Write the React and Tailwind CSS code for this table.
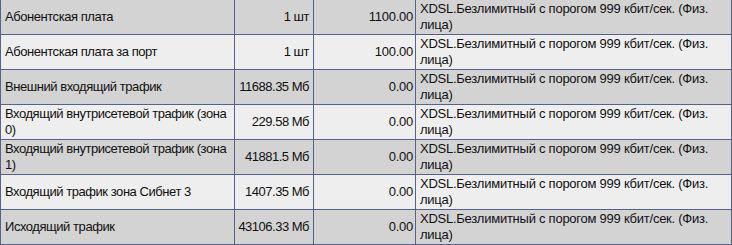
const PLAN = "XDSL.Безлимитный с порогом 999 кбит/сек. (Физ. лица)";

const rows = [
	{ name: "Абонентская плата", qty: "1 шт", sum: "1100.00" },
	{ name: "Абонентская плата за порт", qty: "1 шт", sum: "100.00" },
	{ name: "Внешний входящий трафик", qty: "11688.35 Мб", sum: "0.00" },
	{ name: "Входящий внутрисетевой трафик (зона 0)", qty: "229.58 Мб", sum: "0.00" },
	{ name: "Входящий внутрисетевой трафик (зона 1)", qty: "41881.5 Мб", sum: "0.00" },
	{ name: "Входящий трафик зона Сибнет 3", qty: "1407.35 Мб", sum: "0.00" },
	{ name: "Исходящий трафик", qty: "43106.33 Мб", sum: "0.00" }
];

function App() {
	return (
		<div
			className="w-[732px] h-[245px] overflow-hidden bg-white text-[13px] leading-4 tracking-[-0.25px] text-[#111]"
			style={{ fontFamily: "'Liberation Sans', Arial, sans-serif" }}
		>
			<div className="grid grid-cols-[235px_79px_102px_316px]">
				{rows.map((row, i) => {
					const bg = i % 2 === 0 ? "bg-[#d3d3d3]" : "bg-[#eeeeee]";
					const cell = `h-[35px] flex items-center border-b border-r border-[#56628c] ${bg}`;
					return (
						<div key={i} className="contents">
							<div className={`${cell} border-l pl-1 pr-0 tracking-[-0.45px]`}>{row.name}</div>
							<div className={`${cell} justify-end pr-1 whitespace-nowrap tracking-[-0.5px]`}>{row.qty}</div>
							<div className={`${cell} justify-end pr-[2px] whitespace-nowrap`}>{row.sum}</div>
							<div className={`${cell} pl-1 pr-1`}>{PLAN}</div>
						</div>
					);
				})}
			</div>
		</div>
	);
}

export default App;
